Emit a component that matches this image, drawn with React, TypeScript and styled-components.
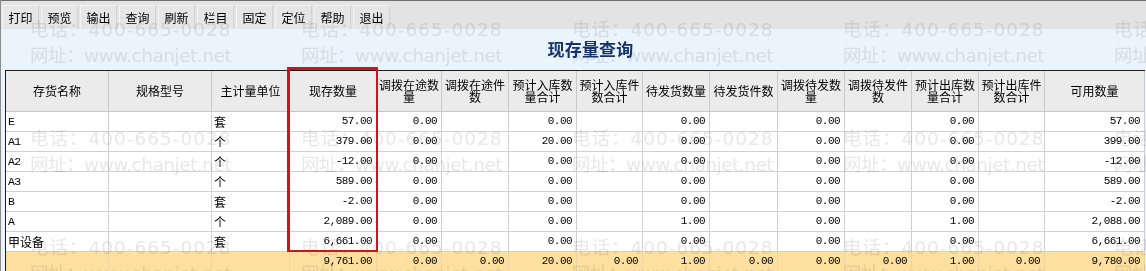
import styled, { createGlobalStyle } from "styled-components";

const GlobalStyle = createGlobalStyle`
  html, body {
    margin: 0;
    padding: 0;
    background: #ffffff;
  }
`;

const CJK = `"Noto Sans CJK SC", "Noto Sans", sans-serif`;
const MONO = `"Liberation Mono", monospace`;

const Page = styled.div`
  position: relative;
  width: 1146px;
  height: 271px;
  overflow: hidden;
  box-sizing: border-box;
  background: #eaf4fd;
  border-left: 1px solid #8a8a8a;
  font-family: ${CJK};
`;

const Toolbar = styled.div`
  display: flex;
  gap: 2px;
  height: 29px;
  box-sizing: border-box;
  padding: 4px 0 0 1px;
  background: #e3e3e3;
  border-top: 1px solid #6f6f6f;
`;

const ToolButton = styled.button`
  width: 37px;
  height: 24px;
  padding: 0;
  background: #e6e6e6;
  border: 1px solid #f4f4f4;
  border-right-color: #d2d2d2;
  border-bottom: none;
  font-family: ${CJK};
  font-size: 12px;
  color: #000;
  line-height: 22px;
`;

const TitleBand = styled.div`
  height: 41px;
  display: flex;
  align-items: center;
  justify-content: center;
  padding-left: 34px;
  padding-bottom: 3px;
  box-sizing: border-box;
`;

const Title = styled.h1`
  margin: 0;
  font-family: ${CJK};
  font-size: 17px;
  font-weight: 700;
  color: #16326e;
  letter-spacing: 0.2px;
`;

const TableWrap = styled.div`
  padding-left: 4px;
`;

const Grid = styled.table`
  width: 1140px;
  table-layout: fixed;
  border-collapse: separate;
  border-spacing: 0;
  border-top: 1px solid #1e1e1e;
  border-left: 1px solid #1e1e1e;
  background: #ffffff;
`;

const HeadCell = styled.th<{ $w: number }>`
  width: ${(p) => p.$w}px;
  height: 41px;
  box-sizing: border-box;
  padding: 0 2px;
  background: #ebebeb;
  border-right: 1px solid #c9c9c9;
  border-bottom: 1px solid #c9c9c9;
  font-family: ${CJK};
  font-size: 12px;
  font-weight: 400;
  line-height: 12px;
  color: #000;
  text-align: center;
  vertical-align: middle;
`;

const Cell = styled.td<{ $num?: boolean; $total?: boolean; $cjk?: boolean }>`
  height: 20px;
  max-height: 20px;
  box-sizing: border-box;
  padding: ${(p) => (p.$num ? "0 4px 0 0" : "0 0 0 2px")};
  background: ${(p) => (p.$total ? "#fde09f" : "#ffffff")};
  border-right: 1px solid ${(p) => (p.$total ? "#efd3a0" : "#d0d0d0")};
  border-bottom: 1px solid ${(p) => (p.$total ? "#efd3a0" : "#d0d0d0")};
  font-family: ${(p) => (p.$cjk ? CJK : MONO)};
  font-size: ${(p) => (p.$cjk ? "12px" : p.$num ? "11px" : "11.5px")};
  letter-spacing: ${(p) => (p.$cjk ? "0" : "-0.55px")};
  line-height: 19px;
  color: #000;
  text-align: ${(p) => (p.$num ? "right" : "left")};
  vertical-align: middle;
  white-space: nowrap;
  overflow: hidden;
`;

const Watermark = styled.div`
  position: absolute;
  inset: 0;
  pointer-events: none;
  display: grid;
  grid-template-columns: repeat(5, 271px);
  grid-auto-rows: 109px;
  padding: 17px 0 0 29px;
  mix-blend-mode: multiply;
`;

const Mark = styled.div`
  display: flex;
  flex-direction: column;
  font-family: "DejaVu Sans", "Noto Sans CJK SC", sans-serif;
  font-size: 18.5px;
  line-height: 26px;
  color: #e8e8e8;
  white-space: nowrap;
`;

const MarkLine = styled.span<{ $spacing: number }>`
  letter-spacing: ${(p) => p.$spacing}px;
`;

const Highlight = styled.div`
  position: absolute;
  left: 286px;
  top: 67px;
  width: 91px;
  height: 185px;
  box-sizing: border-box;
  border: 3px solid #c5181c;
  border-right-width: 2px;
  border-bottom-width: 2px;
  pointer-events: none;
`;

const tools = ["打印", "预览", "输出", "查询", "刷新", "栏目", "固定", "定位", "帮助", "退出"];

const columns = [
  { title: "存货名称", w: 103 },
  { title: "规格型号", w: 103 },
  { title: "主计量单位", w: 78 },
  { title: "现存数量", w: 87 },
  { title: "调拨在途数量", w: 65 },
  { title: "调拨在途件数", w: 67 },
  { title: "预计入库数量合计", w: 68 },
  { title: "预计入库件数合计", w: 66 },
  { title: "待发货数量", w: 67 },
  { title: "待发货件数", w: 68 },
  { title: "调拨待发数量", w: 67 },
  { title: "调拨待发件数", w: 67 },
  { title: "预计出库数量合计", w: 67 },
  { title: "预计出库件数合计", w: 66 },
  { title: "可用数量", w: 100 },
];

// name, spec, unit, then the 12 number columns
const rows: string[][] = [
  ["E", "", "套", "57.00", "0.00", "", "0.00", "", "0.00", "", "0.00", "", "0.00", "", "57.00"],
  ["A1", "", "个", "379.00", "0.00", "", "20.00", "", "0.00", "", "0.00", "", "0.00", "", "399.00"],
  ["A2", "", "个", "-12.00", "0.00", "", "0.00", "", "0.00", "", "0.00", "", "0.00", "", "-12.00"],
  ["A3", "", "个", "589.00", "0.00", "", "0.00", "", "0.00", "", "0.00", "", "0.00", "", "589.00"],
  ["B", "", "套", "-2.00", "0.00", "", "0.00", "", "0.00", "", "0.00", "", "0.00", "", "-2.00"],
  ["A", "", "个", "2,089.00", "0.00", "", "0.00", "", "1.00", "", "0.00", "", "1.00", "", "2,088.00"],
  ["甲设备", "", "套", "6,661.00", "0.00", "", "0.00", "", "0.00", "", "0.00", "", "0.00", "", "6,661.00"],
];

const total = ["", "", "", "9,761.00", "0.00", "0.00", "20.00", "0.00", "1.00", "0.00", "0.00", "0.00", "1.00", "0.00", "9,780.00"];

const isCjk = (s: string) => /[\u4e00-\u9fff]/.test(s);

export default function App() {
  return (
    <>
      <GlobalStyle />
      <Page>
        <Toolbar>
          {tools.map((t) => (
            <ToolButton key={t}>{t}</ToolButton>
          ))}
        </Toolbar>
        <TitleBand>
          <Title>现存量查询</Title>
        </TitleBand>
        <TableWrap>
          <Grid>
            <thead>
              <tr>
                {columns.map((c) => (
                  <HeadCell key={c.title} $w={c.w}>
                    {c.title}
                  </HeadCell>
                ))}
              </tr>
            </thead>
            <tbody>
              {rows.map((r, i) => (
                <tr key={i}>
                  {r.map((v, j) => (
                    <Cell key={j} $num={j >= 3} $cjk={isCjk(v)}>
                      {v}
                    </Cell>
                  ))}
                </tr>
              ))}
              <tr>
                {total.map((v, j) => (
                  <Cell key={j} $num={j >= 3} $total>
                    {v}
                  </Cell>
                ))}
              </tr>
            </tbody>
          </Grid>
        </TableWrap>
        <Watermark>
          {Array.from({ length: 15 }).map((_, i) => (
            <Mark key={i}>
              <MarkLine $spacing={1}>电话：400-665-0028</MarkLine>
              <MarkLine $spacing={-0.5}>网址：www.chanjet.net</MarkLine>
            </Mark>
          ))}
        </Watermark>
        <Highlight />
      </Page>
    </>
  );
}
